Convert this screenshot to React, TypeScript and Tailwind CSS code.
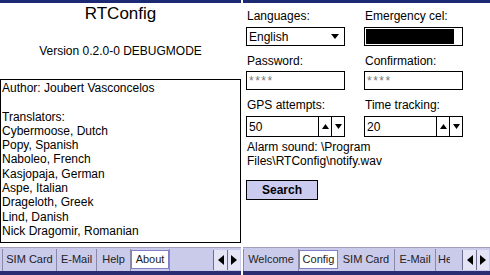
import React from 'react'

const translators = [
  'Cybermoose, Dutch',
  'Popy, Spanish',
  'Naboleo, French',
  'Kasjopaja, German',
  'Aspe, Italian',
  'Drageloth, Greek',
  'Lind, Danish',
  'Nick Dragomir, Romanian',
]

const Arrows = () => (
  <div className="flex h-[20px] items-stretch border-l border-[#6e6e90] bg-[#e4e4f6]">
    <div className="flex w-[13px] items-center justify-center">
      <svg width="6" height="10" viewBox="0 0 6 10"><path d="M6 0L0 5L6 10Z" fill="black" /></svg>
    </div>
    <div className="flex w-[13px] items-center justify-center border-l border-[#6e6e90]">
      <svg width="6" height="10" viewBox="0 0 6 10"><path d="M0 0L6 5L0 10Z" fill="black" /></svg>
    </div>
  </div>
)

const Tab = ({ label, active, w }: { label: string; active?: boolean; w: string }) => (
  <div
    className={
      active
        ? `flex h-[19px] items-center justify-center border border-[#8080c8] bg-white ${w}`
        : `flex h-[22px] items-center justify-center border-r border-[#8a8aa8] ${w}`
    }
  >
    {label}
  </div>
)

const TabBar = ({ children }: { children: React.ReactNode }) => (
  <div className="flex h-[24px] items-center border-t border-[#a0a0bc] bg-[#cacaea] text-[11px] text-[#222]">
    {children}
  </div>
)

const Spin = ({ value }: { value: string }) => (
  <div className="flex h-[21px] w-[99px] items-center border border-black bg-white">
    <span className="flex-1 pl-[2px]">{value}</span>
    <div className="flex h-full w-[13px] items-center justify-center border-l border-black">
      <svg width="7" height="5" viewBox="0 0 7 5"><path d="M0 5L3.5 0L7 5Z" fill="black" /></svg>
    </div>
    <div className="flex h-full w-[13px] items-center justify-center border-l border-black">
      <svg width="7" height="5" viewBox="0 0 7 5"><path d="M0 0L3.5 5L7 0Z" fill="black" /></svg>
    </div>
  </div>
)

const About = () => (
  <div className="flex w-[241px] flex-col">
    <div className="h-[3px] bg-[#1c2a74]" />
    <div className="flex-1 bg-white">
      <div className="mt-[1px] text-center text-[17px] leading-[20px]">RTConfig</div>
      <div className="mt-[19px] text-center text-[12px] leading-[16px]">Version 0.2.0-0 DEBUGMODE</div>
      <div className="mt-[20px] h-[164px] border border-black pl-[1px] pt-[1px] text-[12px] leading-[14.3px]">
        <div>Author: Joubert Vasconcelos</div>
        <div className="mt-[14.3px]">Translators:</div>
        {translators.map(t => (
          <div key={t}>{t}</div>
        ))}
      </div>
    </div>
    <TabBar>
      <div className="flex h-full flex-1 items-center pl-[2px]">
        <Tab label="SIM Card" w="w-[55px] border-l" />
        <Tab label="E-Mail" w="w-[40px]" />
        <Tab label="Help" w="w-[34px]" />
        <Tab label="About" w="w-[38px]" active />
        <div className="h-[22px] w-[1px] bg-[#8a8aa8]" />
      </div>
      <div className="pr-[1px]">
        <Arrows />
      </div>
    </TabBar>
    <div className="h-[4px] bg-[#2b2d72]" />
  </div>
)

const Config = () => (
  <div className="flex w-[247px] flex-col">
    <div className="h-[3px] bg-[#1c2a74]" />
    <div className="flex-1 bg-white pl-[3px] pt-[6px] text-[12px] leading-[14px]">
      <div className="grid grid-cols-[118px_1fr]">
        <div className="pl-[1px]">Languages:</div>
        <div className="pl-[1px]">Emergency cel:</div>
        <div className="mt-[4px] flex h-[19px] w-[99px] items-center border border-black pl-[2px]">
          <span className="flex-1">English</span>
          <svg className="mr-[5px]" width="8" height="5" viewBox="0 0 8 5"><path d="M0 0L4 5L8 0Z" fill="black" /></svg>
        </div>
        <div className="mt-[4px] h-[19px] w-[99px] border border-black p-[1px]">
          <div className="h-full w-[88px] bg-black" />
        </div>
        <div className="mt-[8px] pl-[1px]">Password:</div>
        <div className="mt-[8px] pl-[1px]">Confirmation:</div>
        <div className="mt-[3px] flex h-[19px] w-[99px] items-center border border-black pl-[2px] text-[12px] tracking-[1.5px] text-[#777]">****</div>
        <div className="mt-[3px] flex h-[19px] w-[99px] items-center border border-black pl-[2px] text-[12px] tracking-[1.5px] text-[#777]">****</div>
        <div className="mt-[8px] pl-[1px]">GPS attempts:</div>
        <div className="mt-[8px] pl-[1px]">Time tracking:</div>
        <div className="mt-[4px]"><Spin value="50" /></div>
        <div className="mt-[4px]"><Spin value="20" /></div>
      </div>
      <div className="mt-[3px] pl-[1px]">
        Alarm sound: \Program
        <br />
        Files\RTConfig\notify.wav
      </div>
      <button className="mt-[12px] flex h-[20px] w-[72px] items-center justify-center border border-black bg-[#cbcbf0] text-[12px] font-bold">
        Search
      </button>
    </div>
    <TabBar>
      <div className="flex h-full flex-1 items-center overflow-hidden">
        <Tab label="Welcome" w="w-[56px] border-l" />
        <Tab label="Config" w="w-[39px]" active />
        <Tab label="SIM Card" w="w-[57px]" />
        <Tab label="E-Mail" w="w-[41px]" />
        <div className="w-[14px] overflow-hidden whitespace-nowrap pl-[2px]">Help</div>
      </div>
      <div className="pr-[1px]">
        <Arrows />
      </div>
    </TabBar>
    <div className="h-[4px] bg-[#2b2d72]" />
  </div>
)

export default function App() {
  return (
    <div
      className="flex h-[275px] w-[490px] gap-[2px] bg-white text-black"
      style={{ fontFamily: '"Liberation Sans", Arial, sans-serif' }}
    >
      <About />
      <Config />
    </div>
  )
}
